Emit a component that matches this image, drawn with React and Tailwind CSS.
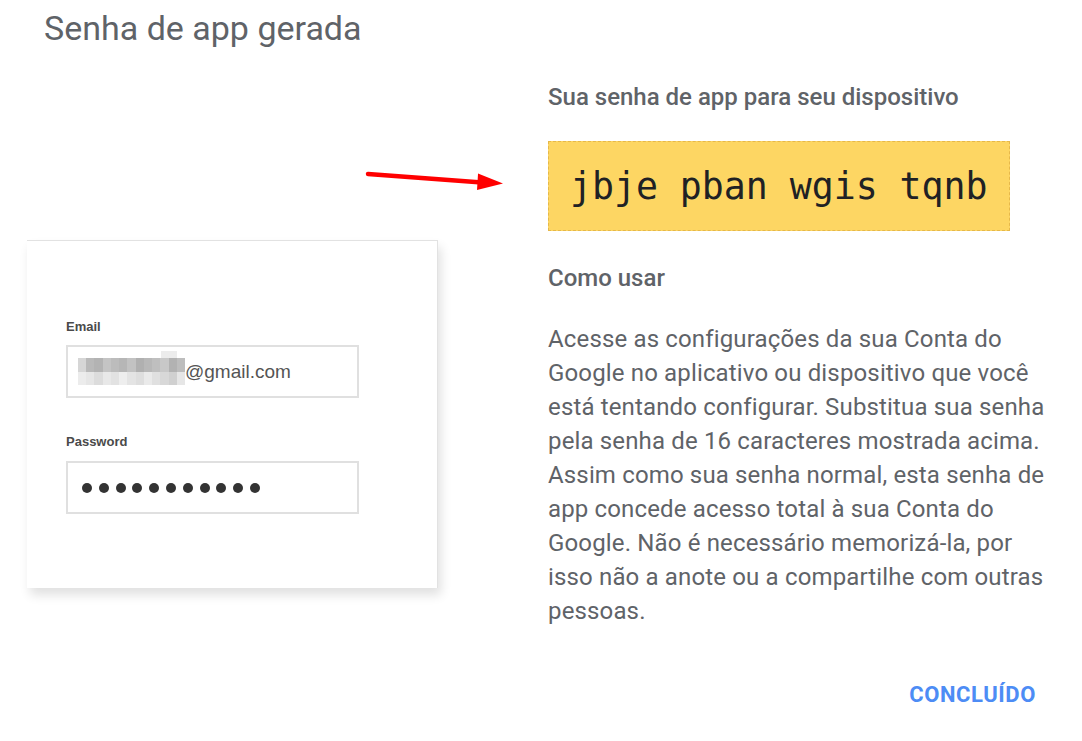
import React from "react";

const topRow = ["#d6d6d6","#b9b9b9","#b3b3b3","#c4c4c4","#bcbcbc","#b6b6b6","#c2c2c2","#b0b0b0","#b8b8b8","#bfbfbf","#c8c8c8","#b2b2b2","#bdbdbd"];
const botRow = ["#ececec","#e6e6e6","#dcdcdc","#e8e8e8","#e2e2e2","#eeeeee","#e4e4e4","#dedede","#eaeaea","#e0e0e0","#d8d8d8","#d0d0d0","#e6e6e6"];

function Pixelated() {
  return (
    <div className="relative flex flex-col w-[107px] h-[27px]">
      <div className="absolute left-[83px] top-[-7px] w-[16px] h-[7px] bg-[#ececec]" />
      <div className="flex h-[14px]">
        {topRow.map((c, i) => (
          <div key={i} className="h-full flex-1" style={{ backgroundColor: c }} />
        ))}
      </div>
      <div className="flex h-[13px]">
        {botRow.map((c, i) => (
          <div key={i} className="h-full flex-1" style={{ backgroundColor: c }} />
        ))}
      </div>
    </div>
  );
}

export default function App() {
  return (
    <div className="relative w-[1082px] h-[741px] overflow-hidden bg-white font-['Roboto',sans-serif]">
      <h1 className="pl-[44px] pt-[8px] text-[34px] leading-[40px] text-[#5f6368] font-normal">
        Senha de app gerada
      </h1>

      <svg
        className="absolute left-[362px] top-[168px]"
        width="146"
        height="26"
        viewBox="0 0 146 26"
      >
        <line x1="6" y1="6" x2="120" y2="14.5" stroke="#ff0000" strokeWidth="4.5" strokeLinecap="round" />
        <polygon points="116,5.5 141,15.5 115,22" fill="#ff0000" />
      </svg>

      <div className="flex">
        <div className="w-[548px] shrink-0">
          <div className="ml-[27px] mt-[192px] w-[411px] h-[348px] bg-white border-t border-r border-[#e2e2e2] shadow-[3px_7px_10px_rgba(0,0,0,0.12)] pl-[39px] pt-[78px] font-['Liberation_Sans',Arial,sans-serif]">
            <div className="text-[13px] leading-[16px] font-bold text-[#4a4a4a]">Email</div>
            <div className="mt-[10px] w-[293px] h-[53px] border-2 border-[#e0e0e0] flex items-center pl-[10px]">
              <Pixelated />
              <span className="text-[19px] text-[#555555] leading-none">@gmail.com</span>
            </div>
            <div className="mt-[36px] text-[13px] leading-[16px] font-bold text-[#4a4a4a]">Password</div>
            <div className="mt-[11px] w-[293px] h-[53px] border-2 border-[#e0e0e0] flex items-center pl-[14px] gap-[6.8px]">
              {Array.from({ length: 11 }).map((_, i) => (
                <div key={i} className="w-[10px] h-[10px] rounded-full bg-[#333333]" />
              ))}
            </div>
          </div>
        </div>

        <div className="w-[500px] shrink-0 pt-[35px]">
          <div className="text-[24px] leading-[28px] font-medium text-[#5f6368]">
            Sua senha de app para seu dispositivo
          </div>
          <div className="mt-[30px] w-[462px] h-[90px] bg-[#fdd663] border border-dashed border-[#e6b84a] flex items-center pl-[21px] pt-[3px]">
            <span className="font-['DejaVu_Sans_Mono',monospace] text-[36.5px] leading-none text-[#202124]">
              jbje pban wgis tqnb
            </span>
          </div>
          <div className="mt-[33px] text-[24px] leading-[28px] font-medium text-[#5f6368]">
            Como usar
          </div>
          <p className="mt-[30px] text-[24px] leading-[34px] tracking-[0.15px] text-[#5f6368]">
            Acesse as configurações da sua Conta do Google no aplicativo ou dispositivo que você está tentando configurar. Substitua sua senha pela senha de 16 caracteres mostrada acima. Assim como sua senha normal, esta senha de app concede acesso total à sua Conta do Google. Não é necessário memorizá-la, por isso não a anote ou a compartilhe com outras pessoas.
          </p>
          <div className="mt-[53px] flex justify-end pr-[12px]">
            <span className="text-[22px] leading-[28px] font-bold tracking-[0.6px] text-[#4d8cf5]">
              CONCLUÍDO
            </span>
          </div>
        </div>
      </div>
    </div>
  );
}
